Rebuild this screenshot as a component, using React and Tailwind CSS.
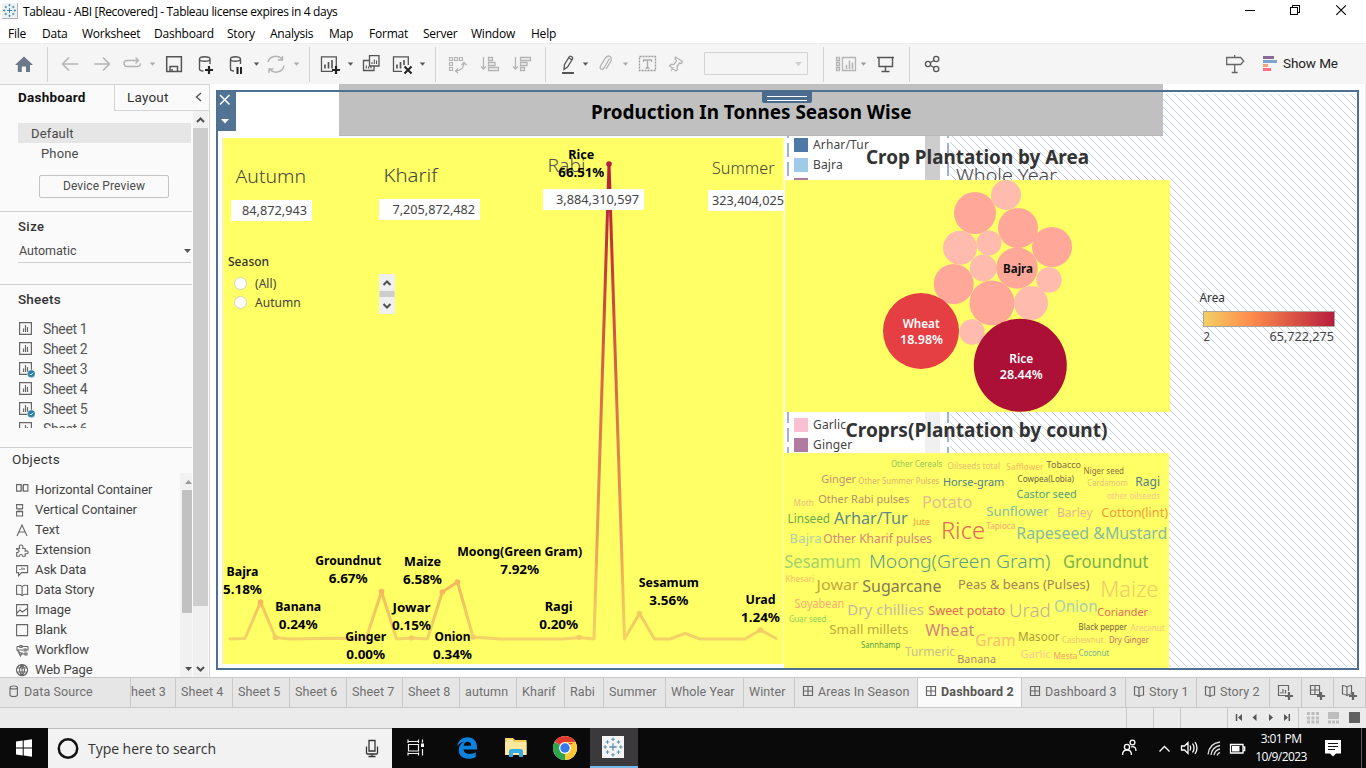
import React from "react";

/* An svg slot whose coordinates are window coordinates, so neighbouring slots tile in a flex row. */
function Ico({ x, y, w, h, children, className = "" }) {
  return (
    <svg width={w} height={h} viewBox={`${x} ${y} ${w} ${h}`} className={`shrink-0 ${className}`} fill="none" stroke="#555" strokeWidth="1.3">
      {children}
    </svg>
  );
}

const Tool = (p) => <Ico y={44} h={40} {...p} />;
const Sep = () => <div className="h-[35px] w-px shrink-0 bg-[#d2d2d2]" />;
const Caret = ({ x, y = 64, c = "#555" }) => <path d={`M${x - 2.7} ${y - 1.5}h5.4l-2.7 3.2z`} fill={c} stroke="none" />;

function TableauMark({ c = "#3f7fae" }) {
  return (
    <g stroke={c} fill="none">
      <path strokeWidth="1.4" d="M12 8v8M8 12h8" />
      <path strokeWidth="1.1" d="M12 1.5v4M10 3.5h4M12 18.5v4M10 20.5h4M3.500 10v4M1.500 12h4M20.500 10v4M18.500 12h4M6 4.500v4M4 6.500h4M18 4.500v4M16 6.500h4M6 15.500v4M4 17.500h4M18 15.500v4M16 17.500h4" />
    </g>
  );
}

const menus = [
  ["File", "w-[34px]"], ["Data", "w-[40px]"], ["Worksheet", "w-[72px]"], ["Dashboard", "w-[73px]"], ["Story", "w-[43px]"],
  ["Analysis", "w-[59px]"], ["Map", "w-[40px]"], ["Format", "w-[54px]"], ["Server", "w-[48px]"], ["Window", "w-[60px]"], ["Help", "w-[40px]"],
];

function TitleBar() {
  return (
    <div className="flex h-[24px] shrink-0 items-center bg-white pl-[2px]">
      <svg width="16" height="16" viewBox="0 0 24 24" className="mr-[5px] mb-[2px] border-r border-b border-[#b5b5b5] bg-[#f1f1f1]"><TableauMark c="#1f7aad" /></svg>
      <div className="text-[12px] tracking-[-0.340px] whitespace-nowrap text-black">Tableau - ABI [Recovered] - Tableau license expires in 4 days</div>
      <Ico x={1230} y={0} w={136} h={24} className="ml-auto">
        <g stroke="#000" strokeWidth="1" shapeRendering="crispEdges">
          <path d="M1245 10.500h10" />
          <path d="M1290.500 7.500h7v7h-7zM1292.500 7v-1.500h7v7h-1.500" />
        </g>
        <path d="M1336.300 5.300l9.600 9.600M1345.900 5.300l-9.600 9.600" stroke="#000" strokeWidth="1.1" />
      </Ico>
    </div>
  );
}

function Toolbar() {
  const lt = "#b4b4b4";
  return (
    <div className="flex h-[41px] shrink-0 items-center border-t border-[#ededed] bg-[#f5f5f5]">
      <Tool x={0} w={47}><path d="M24 56.500l-9 8.500h2.800V72h4v-5.500h4.200V72h4v-7h3z" fill="#6b7887" stroke="none" /></Tool>
      <Sep />
      <Tool x={48} w={38}><path d="M78 64H63M69 57.500L62.500 64l6.500 6.500" stroke={lt} strokeWidth="1.6" /></Tool>
      <Tool x={86} w={32}><path d="M94 64h15M103 57.500l6.500 6.500-6.500 6.500" stroke={lt} strokeWidth="1.6" /></Tool>
      <Tool x={118} w={42}>
        <path d="M134 60.500h-7q-3 0-3 3t3 3h10q3.500 0 3.500-3.200M132 60.500h6M135.500 57.500l3 3-3 3" stroke={lt} strokeWidth="1.4" />
        <Caret x={152.500} c="#aaa" />
      </Tool>
      <Tool x={160} w={28}><path d="M166.700 56.700h14.700v14.700h-14.700zM170 71v-4.500h7.500V71M172 71v-2" strokeWidth="1.5" /></Tool>
      <Tool x={188} w={34}>
        <path d="M199.500 59v10q0 2 4 2M210 59v5M199.500 59a5.200 2.200 0 1 0 10.500 0a5.200 2.200 0 1 0-10.500 0" strokeWidth="1.4" />
        <path d="M209 66v8M205 70h8" strokeWidth="2.200" stroke="#222" />
      </Tool>
      <Tool x={222} w={42}>
        <path d="M230.500 59v10q0 2 3.500 2M240.500 59v5M230.500 59a5 2.200 0 1 0 10 0a5 2.200 0 1 0-10 0" strokeWidth="1.4" />
        <path d="M237.500 67v7M241 67v7" strokeWidth="2" stroke="#222" />
        <Caret x={256.500} />
      </Tool>
      <Tool x={264} w={45}>
        <path d="M268 62a8 7.500 0 0 1 14-3M284 65.500a8 7.500 0 0 1-14 4M282.500 56v4h-4.500M269 73v-4h4.500" stroke={lt} strokeWidth="1.5" />
        <Caret x={296.500} c="#aaa" />
      </Tool>
      <Sep />
      <Tool x={310} w={48}>
        <path d="M333 71.300h-11.500v-14.500h14.800V67" /><path d="M325 64.500v4M328.500 62v6.500M332 60v8.500" strokeWidth="1.700" />
        <path d="M336 66v8M332 70h8" strokeWidth="2.200" stroke="#222" /><Caret x={350.500} />
      </Tool>
      <Tool x={358} w={32}>
        <path d="M369.500 55.700h9.500V66h-9.500zM369 60.500h-5.500v10H374v-4" /><path d="M372 62v2M374.300 59.500V64M376.500 60.500V64M366.300 65.500v3M368.600 66.500v2M371 66v2.500" strokeWidth="1.100" />
      </Tool>
      <Tool x={390} w={45}>
        <path d="M402 71.300h-8.500v-14.500h14.800V65" /><path d="M397 64.500v4M400.500 62v6.500M404 60v5" strokeWidth="1.700" />
        <path d="M404.500 66.500l7 7M411.500 66.500l-7 7" strokeWidth="2" stroke="#222" /><Caret x={422.500} />
      </Tool>
      <Sep />
      <Tool x={436} w={37}>
        <path d="M449.500 57.500h3v3h-3zM454.500 57.500h3v3h-3zM459.500 57.500h3v3h-3zM449.500 62.500h3v3h-3zM449.500 67.500h3v3h-3z" stroke={lt} strokeWidth="1.2" />
        <path d="M464 62.500q0 8-8.500 8.500M461.500 65l2.500-2.500 2.500 2.500M458 68.500l-2.500 2.500 2.500 2" stroke={lt} strokeWidth="1.3" />
      </Tool>
      <Tool x={473} w={33}>
        <path d="M483.500 57v12M481 66.500l2.500 2.500 2.500-2.500M488.500 57.500h4v3h-4zM488.500 62.500h6.500v3h-6.500zM488.500 67.500h10v3h-10z" stroke={lt} strokeWidth="1.3" />
      </Tool>
      <Tool x={506} w={39}>
        <path d="M515.500 57v12M513 66.500l2.500 2.500 2.500-2.500M520.500 57.500h10v3h-10zM520.500 62.500h6.500v3h-6.500zM520.500 67.500h4v3h-4z" stroke={lt} strokeWidth="1.3" />
      </Tool>
      <Sep />
      <Tool x={546} w={47}>
        <path d="M564 69.500l.5-5 5-8q1.500-1 3 1v1.500l-5 8zM569 58l3 2" strokeWidth="1.300" /><path d="M562 73h12" strokeWidth="2" /><Caret x={585.500} />
      </Tool>
      <Tool x={593} w={40}>
        <path d="M609.500 58.500l-5.500 9.500q-1.500 2-3 1t-.5-3l5-8q2.500-3 4.500-1.500t1 4.500l-5 8" stroke={lt} strokeWidth="1.300" /><Caret x={625.500} c="#aaa" />
      </Tool>
      <Tool x={633} w={29}>
        <path d="M639.500 56.500h16v14h-16z" strokeDasharray="2 1" stroke="#999" /><path d="M643.500 62v-2h8v2M647.500 60v8M645.500 68h4" stroke="#aaa" />
      </Tool>
      <Tool x={662} w={42}>
        <path d="M675.500 57l7 4.500-1 2-2-.5-2.500 3.500.5 3-1.500 1.500-6.500-5 1.500-1.500 3-.2 2.500-3.800-1.500-1.500zM673.500 67l-2.500 4" stroke={lt} />
      </Tool>
      <div className="-mt-px flex h-[23px] w-[104px] shrink-0 items-center justify-end rounded-[1px] border border-[#d2d2d2] bg-[#f5f5f5] pr-[5px]">
        <svg width="7" height="4"><path d="M0 0h7l-3.500 4z" fill="#cfcfcf" /></svg>
      </div>
      <div className="w-[15px] shrink-0" />
      <Sep />
      <Tool x={824} w={48}>
        <path d="M836.500 57.500h3v3h-3zM836.500 62.500h3v3h-3zM836.500 67.500h3v3h-3zM842.500 57.500h13v13h-13z" stroke={lt} /><path d="M846.500 65v4M849.500 60.500V69M852.500 62.500V69" strokeWidth="1.600" stroke={lt} /><Caret x={863.500} c="#999" />
      </Tool>
      <Tool x={872} w={37}><path d="M877 57.500h17M879 58v8.500h13.500V58M885.500 66.500v4.500M881.500 71.500h8" strokeWidth="1.400" /></Tool>
      <Sep />
      <Tool x={910} w={50}>
        <circle cx="928" cy="64" r="2.600" /><circle cx="936.200" cy="59" r="2.600" /><circle cx="936.200" cy="69" r="2.600" /><path d="M930.200 62.700l4-2.400M930.200 65.300l4 2.400" />
      </Tool>
      <Tool x={1210} w={72} className="ml-auto">
        <path d="M1226.700 57.500h14l3 3.500-3 3.500h-14zM1234.700 55v2M1234.700 65v7.500M1231.700 72.500h6" stroke="#666" />
        <g stroke="none"><path d="M1263 56h11v3h-11z" fill="#876d96" /><path d="M1263 60h14v3h-14z" fill="#7fa3d1" /><path d="M1263 64h5v3h-5z" fill="#f2a277" /><path d="M1263 68h8v3h-8z" fill="#ff6d83" /></g>
      </Tool>
      <div className="w-[84px] pb-[2px] pl-px font-['Roboto',sans-serif] text-[13.500px] tracking-[-0.100px] text-[#222]">Show Me</div>
    </div>
  );
}

function SheetIcon({ used }) {
  return (
    <svg width="17" height="18" viewBox="0 0 17 18" fill="none" stroke="#666" strokeWidth="1.200" className="mr-[7px] shrink-0">
      <path d="M1.600 2.600h11.800v11.800H1.600z" /><path d="M5.500 8.500v3.500M7.500 5v7M9.500 7v5" />
      {used && <><circle cx="13.300" cy="13.800" r="4" fill="#2f7fa8" stroke="#fafafa" strokeWidth=".6" /><path d="M11.700 13.800l1.200 1.200 2-2.200" stroke="#fff" strokeWidth=".9" /></>}
    </svg>
  );
}

const objects = [
  ["Horizontal Container", <><path d="M4.600 1h2.800v6H4.600z" fill="#bbb" stroke="none" /><path d="M.6.600h4.500v6.500H.6zM7.400.600h4.500v6.500H7.400z" /></>],
  ["Vertical Container", <><path d="M1 4.600h5.500v3H1z" fill="#bbb" stroke="none" /><path d="M.6.600h6v4.200h-6zM.6 7.600h6v4.400h-6z" /></>],
  ["Text", <path d="M1 12L6 1l5 11M2.700 8h6.600" />],
  ["Extension", <path d="M.7 4.500h3Q2.500 1 5 1t1.700 3.500h2.500v2.700q3-1 3 1t-3 1.500v2.500H6.500q0-2-1.500-2t-1.500 2H.7V8.500q2.300 0 2.300-1.500T.7 5.500z" />],
  ["Ask Data", <path d="M.6 1.600h11v7h-6l-3 3v-3h-2zM4 6V5M6 6V3.500M8 6V4" />],
  ["Data Story", <path d="M.6 1.600q3-1 5.500 1 2.500-2 5.500-1v9q-3-1-5.500 1-2.500-2-5.500-1zM6.100 2.600v9" />],
  ["Image", <path d="M.6.600h11v11H.6zM1 9l3-3 2.500 2L11 4.500M4 3.500v.8" />],
  ["Blank", <path d="M.6.600h11v11H.6z" />],
  ["Workflow", <path d="M1 2.500h3M4 1.500h2v2H4zM6 2.500h6M1 6h6M8 5h2v2H8zM10 6h2V2.500M3 9h3l-1.500 3zM6 10h3M9 9h2v2H9zM1 2.500V6l3 3" />],
  ["Web Page", <path d="M6 .6a5.500 5.500 0 1 0 .1 0M6 .6q-5 5.500 0 11M6 .6q5 5.500 0 11M6 .6v11M1 4h10M1 8h10" />],
];

function Sidebar() {
  return (
    <div className="flex w-[210px] shrink-0 flex-col border-r border-[#d4d4d4] bg-[#fafafa] font-['Roboto',sans-serif] text-[#333]">
      <div className="flex h-[27px] shrink-0 border-t border-[#d4d4d4]">
        <div className="w-[114px] pt-[2px] pl-[18px] text-[13.500px] font-bold tracking-[0.250px] text-[#111]">Dashboard</div>
        <div className="flex flex-1 justify-between border-b border-l border-[#d4d4d4] pt-[2px] pr-[7px] pl-[12px] text-[13.500px] tracking-[0.2px]">
          Layout
          <svg width="7" height="10" viewBox="0 0 7 10" className="mt-[5px]" fill="none" stroke="#555" strokeWidth="1.400"><path d="M6 1L1.500 5 6 9" /></svg>
        </div>
      </div>
      <div className="flex min-h-0 flex-1">
        <div className="flex w-[192px] flex-col">
          <div className="flex h-[101px] shrink-0 flex-col border-b border-[#cfcfcf] pt-[12px] text-[13px] text-[#4a4a4a]">
            <div className="ml-[18px] flex h-[20px] w-[173px] items-center bg-[#e6e6e6] pt-px pl-[13px] tracking-[0.150px]">Default</div>
            <div className="flex h-[20px] items-center pt-px pl-[41px] tracking-[0.150px]">Phone</div>
            <div className="mt-[12px] ml-[39px] flex h-[23px] w-[130px] items-center justify-center rounded-[2px] border border-[#c4c4c4] pb-px text-[12px] tracking-[0.120px]">Device Preview</div>
          </div>
          <div className="flex h-[73px] shrink-0 flex-col border-b border-[#cfcfcf] pl-[18px]">
            <div className="h-[27px] pt-[5px] text-[13px] font-medium tracking-[0.5px]">Size</div>
            <div className="flex h-[24px] w-[173px] items-center justify-between border-b border-[#cfcfcf] pt-px text-[12.500px] text-[#4a4a4a]">
              <span className="pl-px">Automatic</span><svg width="7" height="4"><path d="M0 0h7l-3.500 4z" fill="#555" /></svg>
            </div>
          </div>
          <div className="flex h-[163px] shrink-0 flex-col border-b border-[#cfcfcf] pl-[18px]">
            <div className="h-[34px] pt-[4px] text-[13.500px] font-medium tracking-[0.200px]">Sheets</div>
            <div className="h-[109px] overflow-hidden text-[14px] tracking-[-0.350px] text-[#555]">
              {[1, 2, 3, 4, 5, 6].map((n) => (
                <div key={n} className="flex h-[20px] items-center"><SheetIcon used={n === 3 || n === 5} /><span className="pl-px">Sheet {n}</span></div>
              ))}
            </div>
          </div>
          <div className="flex min-h-0 flex-1 flex-col">
            <div className="h-[25px] shrink-0 pt-[1px] pl-[12px] text-[13.500px] tracking-[0.350px]">Objects</div>
            <div className="flex min-h-0 flex-1">
              <div className="w-[180px] overflow-hidden pt-[7px] pl-[16px] text-[13px] tracking-[-0.080px] text-[#444]">
                {objects.map(([name, art]) => (
                  <div key={name} className="flex h-[20px] items-center">
                    <svg width="13" height="13" viewBox="0 0 13 13" fill="none" stroke="#666" strokeWidth="1.100" className="mr-[6px]">{art}</svg>{name}
                  </div>
                ))}
              </div>
              <div className="flex w-[12px] flex-col items-center justify-between bg-[#f1f1f1]">
                <svg width="12" height="17"><path d="M5 11h7l-3.500-4z" fill="#9a9a9a" /></svg>
                <div className="ml-[2px] h-[123px] w-[10px] bg-[#c1c1c1]" />
                <div className="flex-1" />
                <svg width="12" height="12"><path d="M5 2h7l-3.500 4z" fill="#505050" /></svg>
              </div>
            </div>
          </div>
        </div>
        <div className="ml-px flex w-[15px] flex-col bg-[#f0f0f0]">
          <svg width="15" height="17" fill="none" stroke="#505050" strokeWidth="2"><path d="M4 11l3.500-3.500L11 11" /></svg>
          <div className="h-[478px] bg-[#cdcdcd]" />
          <div className="flex-1" />
          <svg width="15" height="17" fill="none" stroke="#505050" strokeWidth="2"><path d="M4 7l3.500 3.500L11 7" /></svg>
        </div>
      </div>
    </div>
  );
}

/* text, left, baseline, width, size, colour */
const words = [
  ["Other Cereals", 891.300, 466.700, 51, 8, "#8fc85a"], ["Oilseeds total", 948, 468.700, 52, 8, "#e8bd72"], ["Safflower", 1006.700, 470, 36.700, 8, "#fcb765"],
  ["Tobacco", 1047, 468.300, 34, 9, "#7b6a4a"], ["Niger seed", 1084, 474, 40, 8, "#8d6f45"], ["Ginger", 821.700, 482.700, 34.300, 11.500, "#c18e78"],
  ["Other Summer Pulses", 858.700, 483.700, 80.700, 8, "#e3b075"], ["Horse-gram", 943.300, 485.700, 61, 11, "#4f7f8b"], ["Cowpea(Lobia)", 1018, 481.700, 56, 8.500, "#6e6148"],
  ["Cardamom", 1087.700, 486, 40, 8, "#e9c07d"], ["Ragi", 1135.700, 485.700, 24.300, 12, "#4f7f8b"], ["Castor seed", 1017, 497.700, 59.700, 11, "#4fa184"],
  ["other oilseeds", 1107.300, 499, 52.700, 8, "#f5c98c"], ["Moth", 794, 505.700, 19.700, 8, "#e9bd80"], ["Other Rabi pulses", 818.700, 503, 90.700, 11.500, "#b98d6b"],
  ["Potato", 922.300, 507.700, 50, 16, "#dfbd8c"], ["Sunflower", 986.700, 515.700, 62, 13, "#86bda0"], ["Barley", 1057.300, 517, 35.300, 12.500, "#e5b788"],
  ["Cotton(lint)", 1101.700, 517, 66.300, 12.500, "#f39a3c"], ["Linseed", 788, 522.700, 42, 12, "#68a94e"], ["Arhar/Tur", 834.300, 524.300, 73.300, 16, "#5d8a8a"],
  ["Jute", 914, 525.300, 16, 8.500, "#f39a3c"], ["Rice", 941.300, 539, 43.700, 23, "#e5685a"], ["Tapioca", 986.700, 529.300, 28.700, 8, "#fba578"],
  ["Rapeseed &Mustard", 1016.700, 539, 150.700, 16, "#86bda0"], ["Bajra", 790, 543.300, 31.700, 12.500, "#b0d0a6"], ["Other Kharif pulses", 823.700, 542.700, 108.300, 12, "#d6857b"],
  ["Sesamum", 784.700, 568, 76.300, 18, "#9fd46a"], ["Moong(Green Gram)", 869.300, 568, 181, 19, "#57a086"], ["Groundnut", 1063.300, 568, 85.300, 17.500, "#78b34b"],
  ["Khesari", 786, 581.700, 28, 8, "#fdb96b"], ["Jowar", 817, 589.700, 41.700, 15, "#bfa83f"], ["Sugarcane", 862.700, 592, 78.700, 16, "#82795b"],
  ["Peas & beans (Pulses)", 958.300, 589.300, 131.300, 13, "#a5825a"], ["Maize", 1100.700, 597, 57.700, 22, "#f4c867"], ["Soyabean", 795, 608, 49.300, 12, "#fdaa78"],
  ["Dry chillies", 847.700, 615, 76.300, 15, "#c5b99a"], ["Sweet potato", 929, 615, 76.300, 12, "#e5685a"], ["Urad", 1009.300, 617.300, 41.300, 19, "#beb296"],
  ["Onion", 1054.300, 611.700, 43.300, 16, "#a6d0b0"], ["Coriander", 1097.700, 616, 50.300, 11.500, "#e5685a"], ["Guar seed", 789.300, 621.700, 37, 8, "#8fcf5c"],
  ["Small millets", 829.700, 634, 78.700, 13, "#bfa83f"], ["Wheat", 925.700, 636, 48.700, 17, "#d6857b"], ["Gram", 975.700, 645.700, 40, 16, "#fcbc6c"],
  ["Masoor", 1018.300, 640.700, 41.300, 12.500, "#ad9a3b"], ["Black pepper", 1079, 629.700, 48, 8.500, "#755c43"], ["Arecanut", 1131, 630.700, 33.700, 8, "#f9c88a"],
  ["Cashewnut", 1062.300, 642.700, 41.300, 8, "#ecc673"], ["Dry Ginger", 1109.300, 642.700, 39.700, 8.500, "#c76b66"], ["Sannhamp", 861.300, 647.700, 39, 8.500, "#51a044"],
  ["Turmeric", 905.300, 656, 49.700, 12, "#c9bc90"], ["Banana", 957.700, 663, 38.300, 11.500, "#b28570"], ["Garlic", 1021, 657.700, 29.700, 11.500, "#f8c892"],
  ["Mesta", 1054, 659, 23.300, 8.500, "#fb9c6b"], ["Coconut", 1079, 656, 30, 8.500, "#74b096"],
];

const bubbles = [
  [975, 213, 21, 1], [1006, 195, 15, 0], [1018, 228, 20, 1], [1052, 247, 20, 1], [960, 247.700, 17, 0], [989, 243, 12.500, 0], [983.300, 268, 13.500, 0],
  [1017, 268, 20.700, 1], [1049, 280, 12.700, 0], [953.700, 284, 20, 1], [992, 303, 22.500, 1], [1031, 303, 17, 0], [972, 332, 12.700, 0], [921, 331, 38, 2], [1020.300, 365.300, 46.500, 3],
];
const bubbleFill = ["#ffbbae", "#ffa799", "#e53f43", "#ac1037"];

const line = "230,639 245,638.5 260.5,602 275.5,637.5 290,639 336,638.3 366,639 381.5,591.5 396.5,639 411.5,638 427.5,639 442.3,592 457.5,582 473,637 500,639 564,639 579,637.5 594,639 609,164 624.5,639 639.5,613.5 654.5,639 670,639 685,633.3 700,639 745,639 760.5,630 776,638.5";
const dots = [[260.500, 602], [275.500, 637.500], [381.500, 591.500], [411.500, 638], [442.300, 592], [457.500, 582], [473, 637], [579, 637.500], [609, 164], [639.500, 613.500], [760.500, 630]];

/* name, share, centre x, first baseline, name width, share width */
const labels = [
  ["Rice", "66.51%", 581.300, 159, 26, 46], ["Bajra", "5.18%", 242.500, 576, 32, 39], ["Banana", "0.24%", 298.200, 611, 46, 39], ["Groundnut", "6.67%", 348.200, 565, 66, 39], ["Ginger", "0.00%", 365.700, 641, 41, 39],
  ["Jowar", "0.15%", 411.500, 612, 38, 39], ["Maize", "6.58%", 422.500, 566, 37, 39], ["Moong(Green Gram)", "7.92%", 519.700, 556, 125, 39], ["Onion", "0.34%", 452.500, 641, 36, 39],
  ["Ragi", "0.20%", 558.700, 611, 28, 39], ["Sesamum", "3.56%", 668.800, 587, 60, 39], ["Urad", "1.24%", 760.500, 604, 30, 39],
];

function Fit({ x, y, w, size, fill, weight = 400, children }) {
  return <text x={x} y={y} textLength={w} lengthAdjust="spacingAndGlyphs" fontSize={size} fill={fill} fontWeight={weight}>{children}</text>;
}

function Drawing({ x, y, w, h, children, className = "" }) {
  return <svg width={w} height={h} viewBox={`${x} ${y} ${w} ${h}`} className={`absolute ${className}`}>{children}</svg>;
}

function Swatch({ name, color }) {
  return <div className="flex h-[20px] items-center text-[12px] tracking-[0.150px] text-[#444]"><div className={`mr-[5px] size-[14px] ${color}`} />{name}</div>;
}

/* The dashboard is a free canvas of floating, overlapping sheets. */
function Canvas() {
  return (
    <div className="relative min-w-0 flex-1 overflow-hidden bg-white font-['Noto_Sans',sans-serif]">
      <Drawing x={950} y={94} w={406} h={573} className="top-[10px] left-[740px]">
        <defs><pattern id="hatch" width="8" height="8" patternUnits="userSpaceOnUse"><path d="M-1 -1L9 9" stroke="#b3c3dc" strokeWidth=".85" /></pattern></defs>
        <rect x="950" y="94" width="406" height="573" fill="url(#hatch)" />
      </Drawing>
      <div className="absolute top-[52px] left-[577px] flex h-[500px] w-[162px] justify-between">
        <svg width="2" height="500"><path d="M1 0v500" stroke="#9fb2d6" strokeWidth="2" strokeDasharray="14 5" strokeDashoffset="12" /></svg>
        <svg width="2" height="500"><path d="M1 0v500" stroke="#9fb2d6" strokeWidth="2" strokeDasharray="14 5" strokeDashoffset="12" /></svg>
      </div>
      <div className="absolute top-[52px] left-[715px] h-[44px] w-[15px] bg-[#cdcdcd]" />
      <div className="absolute top-[328px] left-[715px] h-[41px] w-[15px] bg-[#f0f0f0]" />
      <div className="absolute top-[50px] left-[584px] h-[46px] w-[120px] overflow-hidden pt-px"><Swatch name="Arhar/Tur" color="bg-[#4e79a7]" /><Swatch name="Bajra" color="bg-[#a0cbe8]" /><Swatch name="" color="bg-[#b07aa1]" /></div>
      <div className="absolute top-[331px] left-[584px] w-[120px]"><Swatch name="Garlic" color="bg-[#fabfd2]" /><Swatch name="Ginger" color="bg-[#b07aa1]" /></div>
      <Drawing x={780} y={136} w={390} h={318} className="top-[52px] left-[570px]">
        <Fit x={956} y={182} w={101} size={19} fill="#444" weight={300}>Whole Year</Fit>
        <Fit x={866} y={164} w={223} size={19.500} fill="#333" weight={700}>Crop Plantation by Area</Fit>
        <Fit x={845.500} y={437} w={262} size={20} fill="#333" weight={700}>Croprs(Plantation by count)</Fit>
      </Drawing>

      <div className="absolute top-0 left-[129px] flex h-[52px] w-[824px] items-center justify-center border-b border-[#b5b5b5] bg-[#c0c0c0] pt-[4px] text-[19.500px] font-bold text-black">
        <svg width="321" height="30" viewBox="0 0 321 30"><Fit x={0} y={21.500} w={320.500} size={19.500} fill="#000" weight={700}>Production In Tonnes Season Wise</Fit></svg>
      </div>

      <Drawing x={222} y={138} w={562} h={526} className="top-[54px] left-[12px]">
        <rect x="222" y="138" width="1" height="526" fill="#eee" />
        <rect x="223" y="138" width="560.500" height="526" fill="#ffff66" />
        <defs>
          <linearGradient id="heat" gradientUnits="userSpaceOnUse" x1="0" y1="164" x2="0" y2="639">
            <stop offset="0" stopColor="#b71d3e" /><stop offset=".2" stopColor="#c5373f" /><stop offset=".5" stopColor="#dc6d4c" /><stop offset=".8" stopColor="#eca158" /><stop offset=".88" stopColor="#f4b85c" /><stop offset="1" stopColor="#f3d267" />
          </linearGradient>
        </defs>
        <polyline points={line} fill="none" stroke="url(#heat)" strokeWidth="3" strokeLinejoin="round" strokeLinecap="round" />
        {dots.map(([x, y]) => <circle key={x} cx={x} cy={y} r="2.800" fill={y < 200 ? "#b71d3e" : y < 610 ? "#f4b860" : "#f3cc66"} />)}
        <Fit x={235.500} y={183} w={70.500} size={19} fill="#444" weight={300}>Autumn</Fit>
        <Fit x={383.500} y={182} w={54} size={19} fill="#444" weight={300}>Kharif</Fit>
        <Fit x={547.500} y={172} w={38} size={18} fill="#555" weight={300}>Rabi</Fit>
        <Fit x={712} y={174} w={62.500} size={16.500} fill="#444" weight={350}>Summer</Fit>
        {labels.map(([name, pct, cx, y, w, pw]) => (
          <g key={name}>
            <Fit x={cx - w / 2} y={y} w={w} size={12} fill="#000" weight={700}>{name}</Fit>
            <Fit x={cx - pw / 2} y={y + 18} w={pw} size={12} fill="#000" weight={700}>{pct}</Fit>
          </g>
        ))}
        <path d="M231 200h81v21h-81zM379 199h101v21H379zM543 189h101v21H543zM708 190h76v21h-76z" fill="#fff" />
        <Fit x={242} y={215} w={65} size={12.500} fill="#444">84,872,943</Fit>
        <Fit x={392.500} y={214} w={82.500} size={12.500} fill="#444">7,205,872,482</Fit>
        <Fit x={556} y={204} w={83} size={12.500} fill="#444">3,884,310,597</Fit>
        <Fit x={712} y={205} w={72} size={12.500} fill="#444">323,404,025</Fit>
      </Drawing>

      <div className="absolute top-[169px] left-[18px] flex w-[167px] flex-col text-[12px] text-[#333]">
        <div className="h-[21px] font-medium tracking-[0.020px]">Season</div>
        <div className="flex justify-between">
          <div className="flex flex-col pl-[6px] tracking-[0.050px] text-[#444]">
            {["(All)", "Autumn"].map((s) => (
              <div key={s} className="flex h-[19px] items-center"><div className="mr-[8px] size-[13px] rounded-full border border-[#d5d5c0] bg-white" />{s}</div>
            ))}
          </div>
          <svg width="16" height="40" viewBox="0 0 16 40"><path d="M0 0h16v40H0z" fill="#f0f0f0" /><path d="M.5 17h15v6H.500z" fill="#cdcdcd" /><path d="M4.500 11L8 7.500l3.500 3.500M4.500 30L8 33.500l3.500-3.500" fill="none" stroke="#505050" strokeWidth="2" /></svg>
        </div>
      </div>

      <Drawing x={785} y={180} w={385} h={232} className="top-[96px] left-[575px]">
        <rect x="785" y="180" width="385" height="232" fill="#ffff66" />
        {bubbles.map(([x, y, r, k]) => <circle key={`${x}-${y}`} cx={x} cy={y} r={r} fill={bubbleFill[k]} />)}
        <Fit x={1003} y={273} w={30} size={12} fill="#111" weight={700}>Bajra</Fit>
        <Fit x={902.700} y={328} w={37} size={12} fill="#fff" weight={600}>Wheat</Fit>
        <Fit x={900} y={344} w={43} size={12} fill="#fff" weight={600}>18.98%</Fit>
        <Fit x={1009.300} y={363} w={24} size={12} fill="#fff" weight={600}>Rice</Fit>
        <Fit x={999.800} y={379} w={43} size={12} fill="#fff" weight={600}>28.44%</Fit>
      </Drawing>

      <Drawing x={784} y={453} w={385} h={215} className="top-[369px] left-[574px]">
        <rect x="784" y="453" width="385" height="216" fill="#ffff66" />
        {words.map(([t, x, y, w, s, c]) => <Fit key={t} x={x - 0.4} y={y} w={w + 0.4} size={s} fill={c} weight={s > 18.500 ? 320 : s > 14 ? 370 : 400}>{t}</Fit>)}
      </Drawing>

      <Drawing x={1190} y={286} w={150} h={60} className="top-[202px] left-[980px]">
        <defs><linearGradient id="area"><stop offset="0" stopColor="#f3d066" /><stop offset=".35" stopColor="#ff8e4c" /><stop offset="1" stopColor="#b71d3e" /></linearGradient></defs>
        <Fit x={1199.500} y={302} w={25.500} size={12} fill="#333">Area</Fit>
        <rect x="1203.500" y="311.500" width="131" height="15" fill="url(#area)" stroke="#aaa69a" />
        <Fit x={1203.500} y={341} w={6.500} size={12} fill="#444">2</Fit>
        <Fit x={1269.500} y={341} w={64.500} size={12} fill="#444">65,722,275</Fit>
      </Drawing>

      <div className="absolute top-[6px] left-[6px] h-[580px] w-[1143px] border-2 border-[#4e7191]">
        <div className="flex h-[39px] w-[18px] flex-col items-center justify-between bg-[#527394] pt-[2px] pr-[4px] pb-[7px]">
          <svg width="12" height="12" fill="none" stroke="#fff" strokeWidth="1.500"><path d="M1 1l9.500 9.500M10.500 1L1 10.500" /></svg>
          <svg width="8" height="5"><path d="M0 0h8L4 4.500z" fill="#fff" /></svg>
        </div>
      </div>
      <div className="absolute top-[7px] left-[552px] flex h-[12px] w-[50px] flex-col justify-center gap-[3px] rounded-b-[2px] bg-[#4a6b8e] px-[5px] pt-[2px]">
        <div className="h-px bg-white" /><div className="h-px bg-white" />
      </div>
      <div className="absolute top-0 right-0 h-full w-px bg-[#ececec]" />
    </div>
  );
}

const dash = <path d="M1.500 1.500h9v9h-9zM6 1.500v9M1.500 6h9" />;
const story = <path d="M1.500 1.500q2.500 0 4.500 1.500 2-1.500 4.500-1.500v8.500Q8 10 6 11.500 4 10 1.500 10zM6 3v8" />;
const tabs = [
  ["hheet 3", "w-[45px]"], ["Sheet 4", "w-[57px]"], ["Sheet 5", "w-[57px]"], ["Sheet 6", "w-[57px]"], ["Sheet 7", "w-[56px]"], ["Sheet 8", "w-[57px]"],
  ["autumn", "w-[57px]"], ["Kharif", "w-[48px]"], ["Rabi", "w-[39px]"], ["Summer", "w-[62px]"], ["Whole Year", "w-[78px]"], ["Winter", "w-[51px]"],
  ["Areas In Season", "w-[123px]", dash], ["Dashboard 2", "w-[104px]", dash, true], ["Dashboard 3", "w-[104px]", dash], ["Story 1", "w-[71px]", story], ["Story 2", "w-[73px]", story],
];

function TabStrip() {
  return (
    <div className="flex h-[31px] shrink-0 border-t border-b border-[#c8c8c8] bg-[#e6e6e6] font-['Roboto',sans-serif] text-[12.500px] tracking-[0.100px] whitespace-nowrap text-[#6f6f6f]">
      <div className="flex w-[131px] shrink-0 items-center border-r border-[#c8c8c8] pl-[9px]">
        <svg width="10" height="13" className="mr-[5px] mb-[3px]" fill="none" stroke="#666" strokeWidth="1.100"><path d="M1 2.500v7.500q0 1.500 3.700 1.500t3.700-1.500V2.500M1 2.500q0-1.500 3.700-1.500t3.700 1.500-3.700 1.500T1 2.500" /></svg>
        Data Source
      </div>
      {tabs.map(([name, w, icon, on], i) => (
        <div key={name} className={`flex shrink-0 items-center overflow-hidden border-r border-[#c8c8c8] ${w} ${i === 0 ? "justify-end pr-[9px]" : icon ? "pl-[7px]" : "pl-[5px]"} ${on ? "bg-[#fafafa] font-bold tracking-[0.200px] text-[#555]" : ""}`}>
          {icon && <svg width="12" height="12" className="mr-[4px] mb-[3px] shrink-0" fill="none" stroke="#666" strokeWidth="1.200">{icon}</svg>}
          {name}
        </div>
      ))}
      {[0, 1, 2].map((k) => (
        <div key={k} className="flex w-[32px] shrink-0 items-center justify-center border-r border-[#c8c8c8]">
          <svg width="17" height="17" fill="none" stroke="#666" strokeWidth="1.200">
            {k === 0 ? <path d="M8 11.500H1.500v-10h10V7M4 8v1.500M6 5v4.500M8.500 6v3.500" /> : k === 1 ? dash : story}
            <path d="M12 8v8M8 12h8" strokeWidth="2.200" />
          </svg>
        </div>
      ))}
    </div>
  );
}

function StatusBar() {
  return (
    <div className="flex h-[20px] shrink-0 justify-end bg-[#ebebeb]">
      <div className="w-[27px] border-l border-[#c8c8c8]" />
      <div className="w-[27px] border-l border-[#c8c8c8]" />
      <div className="w-[47px] border-l border-[#c8c8c8]" />
      <div className="flex w-[71px] border-l border-[#c8c8c8]">
        <Ico x={1228} y={708} w={70} h={20}><path d="M1236.500 714v7" strokeWidth="1.500" /><path d="M1242 714v7l-4-3.500zM1256.500 714v7l-4-3.500zM1269 714v7l4-3.500zM1284 714v7l4-3.500z" fill="#555" stroke="none" /><path d="M1289.300 714v7" strokeWidth="1.500" /></Ico>
      </div>
      <div className="flex w-[68px] border-l border-[#c8c8c8]">
        <Ico x={1299} y={708} w={67} h={20}>
          <g stroke="none" fill="#bdbdbd"><path d="M1307 712h3v3h-3zM1311.500 712h3v3h-3zM1316 712h3v3h-3zM1307 716.500h3v3h-3zM1311.500 716.500h3v3h-3zM1316 716.500h3v3h-3zM1307 720.500h3v3h-3zM1311.500 720.500h3v3h-3zM1316 720.500h3v3h-3zM1328 712h11v7h-11zM1328 720.500h3v3h-3zM1332 720.500h3v3h-3zM1336 720.500h3v3h-3z" /><path d="M1349 712h11v11h-11z" fill="#616161" /></g>
        </Ico>
      </div>
    </div>
  );
}

function Taskbar() {
  return (
    <div className="flex h-[40px] shrink-0 bg-[#0a0a0b] font-['Open_Sans',sans-serif]">
      <Ico x={0} y={728} w={48} h={40}><path d="M16 741.500l6.700-1v7H16zM23.700 740.400l8.300-1.100v8.200h-8.300zM16 748.500h6.700v7l-6.700-1zM23.700 748.500H32v8.200l-8.300-1.100z" fill="#fff" stroke="none" /></Ico>
      <div className="flex w-[344px] shrink-0 items-center border-t border-[#bdbdbd] bg-[#f2f2f2]">
        <svg width="40" height="39" fill="none"><circle cx="20" cy="19.500" r="9.200" stroke="#111" strokeWidth="2.500" /></svg>
        <div className="text-[14px] tracking-[-0.040px] text-[#333]">Type here to search</div>
        <svg width="40" height="39" className="ml-auto" fill="none" stroke="#333" strokeWidth="1.300"><path d="M17 11.500h6v10.500h-6zM14.500 17.500v6.500q0 1 1 1h9q1 0 1-1v-6.500M20 25v2.500M16.500 27.500h7" /></svg>
      </div>
      <Ico x={392} y={728} w={52} h={40}><path d="M408 743v-3.500M418.500 743v-3.500M408 741.500h10.500M408.500 744.500h10v6.500h-10zM408 755.500v-3M418.500 755.500v-3M408 753.500h10.500M422.500 739.500v3M422.500 749v6.500" stroke="#eee" strokeWidth="1.200" /><path d="M421 743.500h3v3.500h-3z" fill="#fff" stroke="none" /></Ico>
      <Ico x={444} y={728} w={48} h={40}><path d="M457 746.500c1-5.500 5-9.300 10.500-9.300 6.300 0 9.500 4.600 9.500 9.500v2.800h-13.500c.3 3 3 4.500 6.200 4.500 2.300 0 4.300-.6 6.100-1.700v4.600c-2 1.200-4.500 1.800-7.200 1.800-6 0-9.800-3.200-9.800-8.700 0-3.800 2-6.800 5.200-8.300-3.400.5-5.400 2.400-7 4.800zm6.700-.8h7.500c0-2.500-1.300-4-3.600-4-2.200 0-3.500 1.500-3.900 4z" fill="#0b83df" stroke="none" /></Ico>
      <Ico x={492} y={728} w={48} h={40}><g stroke="none"><path d="M505 738h8l2 2h11.500v15H505z" fill="#f8cb55" /><path d="M507 739.500h6v2h-6z" fill="#fff3c4" /><path d="M505 742h21.500v13H505z" fill="#ffe79d" /><path d="M509 757v-5.500q0-2.500 2.500-2.500h9q2.500 0 2.500 2.500v5.500h-4v-4h-6v4z" fill="#35aee4" /></g></Ico>
      <Ico x={540} y={728} w={50} h={40}><g stroke="none"><circle cx="565" cy="748" r="12" fill="#fff" /><path d="M565 748L554.600 742A12 12 0 0 1 575.400 742z" fill="#e33b2e" /><path d="M565 748L575.400 742A12 12 0 0 1 565 760z" fill="#fcc934" /><path d="M565 748L565 760A12 12 0 0 1 554.600 742z" fill="#2da44e" /><path d="M565 742h10.400v1H565zM565 760l5.200-9-5.200 3z" fill="#fcc934" /><circle cx="565" cy="748" r="5.900" fill="#fff" /><circle cx="565" cy="748" r="4.700" fill="#3478ea" /></g></Ico>
      <div className="flex w-[48px] shrink-0 items-center justify-center border-b-2 border-[#76b9ed] bg-[#3b393b]">
        <svg width="22" height="22" viewBox="0 0 24 24" className="mr-[2px] bg-[#f4f4f4]"><TableauMark c="#5b8fae" /></svg>
      </div>
      <Ico x={1110} y={728} w={140} h={40} className="ml-auto">
        <g stroke="#fff" strokeWidth="1.300">
          <circle cx="1127" cy="747" r="2.600" /><path d="M1122.500 755q0-5 4.500-5t4.500 5" /><circle cx="1132.500" cy="742.500" r="2.400" /><path d="M1131 747q5-1.500 5 4" />
          <path d="M1159.500 751.500l5-5 5 5" />
          <path d="M1181.500 746h3l3.500-3.500v11l-3.500-3.500h-3zM1190 745.500q1.500 2.500 0 5M1492.500 743.500M1192.500 743.500q3 4.500 0 9M1195 742q4 6 0 12" />
          <path d="M1208 754.500q1-11 12-12.500M1211 755q1-8 9-9.500M1214 755q1-5 6-6M1217 755.500q1-2.500 3-3" stroke="#ddd" />
          <path d="M1230.500 744.500h12.500v8.500h-12.500zM1243.500 747h1.200v3.500h-1.200" /><path d="M1232 746h7.500v5.500h-7.500z" fill="#fff" stroke="none" />
        </g>
      </Ico>
      <div className="flex w-[62px] flex-col items-center pt-[2px] text-[12px] leading-[18px] tracking-[-0.600px] text-white">
        <div>3:01 PM</div><div>10/9/2023</div>
      </div>
      <Ico x={1312} y={728} w={49} h={40}><path d="M1325 740h16v13.500h-5l-3 3-3-3h-5z" fill="#fff" stroke="none" /><path d="M1328 743.500h10M1328 746.500h10M1328 749.500h7" stroke="#111" strokeWidth="1.100" /></Ico>
      <div className="w-[5px] border-l border-[#5a5a5a]" />
    </div>
  );
}

export default function App() {
  return (
    <div className="flex h-[768px] w-[1366px] flex-col overflow-hidden bg-white font-['Open_Sans',sans-serif]">
      <TitleBar />
      <div className="flex h-[19px] shrink-0 items-center bg-white pl-[8px] text-[12px] tracking-[-0.230px] text-black">
        {menus.map(([m, w]) => <div key={m} className={`shrink-0 ${w}`}>{m}</div>)}
      </div>
      <Toolbar />
      <div className="flex min-h-0 flex-1">
        <Sidebar />
        <Canvas />
      </div>
      <TabStrip />
      <StatusBar />
      <Taskbar />
    </div>
  );
}
